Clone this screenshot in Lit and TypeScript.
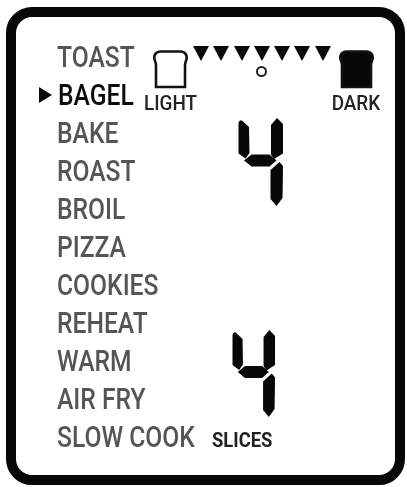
import { LitElement, html, css, svg } from "lit";
import { customElement } from "lit/decorators.js";

const MODES = ["TOAST", "BAGEL", "BAKE", "ROAST", "BROIL", "PIZZA", "COOKIES", "REHEAT", "WARM", "AIR FRY", "SLOW COOK"];
const LEVELS = [0, 1, 2, 3, 4, 5, 6];
const SELECTED_LEVEL = 3;
const BREAD = "M7,1.5 H28 C32,1.5 33.9,5 33.7,8 C33.5,11 32,12 32,15 V37 H3 V15 C3,12 1.5,11 1.3,8 C1.1,5 3,1.5 7,1.5 Z";

const digitFour = svg`
  <path d="M0.5,5 Q1.5,1 4.5,3 L11,9 L11.5,35 L7.5,40.5 L0.5,35.5 Z" />
  <path d="M39,0 L45,6 L45,35.5 L36,41 L33,36.5 L33,7 Z" />
  <path d="M6,42.5 L13.5,36.5 H31.5 L38.5,42.5 L31.5,48.5 H13.5 Z" />
  <path d="M41.5,44 L45,48 L44.5,80 L38.5,88 L32.5,81 L32.5,52 Z" />
`;

@customElement("app-root")
export class AppRoot extends LitElement {
  static styles = css`
    :host {
      display: block;
      width: 407px;
      height: 487px;
      padding: 7px 2px 2px 6px;
      box-sizing: border-box;
      background: #fff;
      font-family: Roboto, "Liberation Sans", sans-serif;
      overflow: hidden;
    }
    .frame {
      box-sizing: border-box;
      width: 399px;
      height: 478px;
      border: 10.5px solid #070707;
      border-radius: 26px;
      display: flex;
      align-items: flex-start;
      filter: blur(0.45px);
    }
    .menu {
      flex: 0 0 129px;
      width: 129px;
      min-width: 0;
      padding: 21px 0 0 23px;
      box-sizing: border-box;
      display: flex;
      flex-direction: column;
    }
    .mode {
      height: 38.1px;
      display: flex;
      align-items: center;
      font-size: 29px;
      font-weight: 500;
      line-height: 1;
      color: #555;
      white-space: nowrap;
      padding-left: 18px;
      position: relative;
    }
    .label {
      display: block;
      transform: scaleX(0.85);
      transform-origin: left center;
    }
    .mode.on {
      color: #0c0c0c;
    }
    .mode.on .label {
      transform: translateX(1px) scaleX(0.85);
    }
    .pointer {
      position: absolute;
      left: 0;
      top: 11px;
      width: 13px;
      height: 16px;
      fill: #0a0a0a;
    }
    .panel {
      flex: 1;
      min-width: 0;
      padding-top: 29px;
      display: flex;
      flex-direction: column;
      align-items: flex-start;
    }
    .shade {
      display: flex;
      align-items: flex-start;
    }
    .end {
      width: 50px;
      padding-top: 4px;
      display: flex;
      flex-direction: column;
      align-items: center;
      gap: 5px;
    }
    .bread {
      width: 35px;
      height: 39px;
      display: block;
    }
    .bread path { fill: none; stroke: #111; stroke-width: 2.6; }
    .bread.dark path { fill: #070707; }
    .tag {
      font-size: 21px;
      font-weight: 500;
      line-height: 18px;
      color: #222;
      white-space: nowrap;
      transform: scaleX(0.9);
    }
    .levels {
      margin-left: -3px;
      width: 139px;
      padding-left: 1px;
      box-sizing: border-box;
      display: flex;
      flex-direction: column;
    }
    .ticks {
      display: flex;
      gap: 4.3px;
    }
    .tick {
      width: 16px;
      height: 15px;
      fill: #0a0a0a;
      display: block;
      flex: none;
    }
    .slot {
      width: 16px;
      height: 10px;
      padding-top: 5px;
      display: flex;
      justify-content: center;
      flex: none;
    }
    .dot {
      width: 11px;
      height: 11px;
      box-sizing: border-box;
      border: 2.2px solid #222;
      border-radius: 50%;
      flex: none;
    }
    .slots {
      display: flex;
      gap: 4.3px;
    }
    .digit {
      display: block;
      fill: #070707;
    }
    .digit.dark-level {
      width: 46px;
      height: 88px;
      margin: 6px 0 0 93px;
    }
    .digit.slices {
      width: 44px;
      height: 87px;
      margin: 124px 0 0 87px;
    }
    .slices-tag {
      margin: 14px 0 0 67px;
      font-size: 20px;
      font-weight: 700;
      line-height: 18px;
      color: #222;
      transform: scaleX(0.92);
      transform-origin: left center;
    }
  `;

  render() {
    return html`
      <div class="frame">
        <div class="menu">
          ${MODES.map(
            (m) => html`<div class="mode ${m === "BAGEL" ? "on" : ""}">
              ${m === "BAGEL"
                ? html`<svg class="pointer" viewBox="0 0 13 16"><path d="M0,0 L13,8 L0,16 Z" /></svg>`
                : ""}<span class="label">${m}</span>
            </div>`,
          )}
        </div>
        <div class="panel">
          <div class="shade">
            <div class="end">
              <svg class="bread" viewBox="0 0 35 39"><path d="${BREAD}" /></svg>
              <span class="tag">LIGHT</span>
            </div>
            <div class="levels">
              <div class="ticks">
                ${LEVELS.map(
                  () => html`<svg class="tick" viewBox="0 0 16 15"><path d="M0,0 H16 L8,15 Z" /></svg>`,
                )}
              </div>
              <div class="slots">
                ${LEVELS.map(
                  (l) => html`<div class="slot">${l === SELECTED_LEVEL ? html`<div class="dot"></div>` : ""}</div>`,
                )}
              </div>
            </div>
            <div class="end">
              <svg class="bread dark" viewBox="0 0 35 39"><path d="${BREAD}" /></svg>
              <span class="tag">DARK</span>
            </div>
          </div>
          <svg class="digit dark-level" viewBox="0 0 46 88">${digitFour}</svg>
          <svg class="digit slices" viewBox="0 0 46 88" preserveAspectRatio="none">${digitFour}</svg>
          <div class="slices-tag">SLICES</div>
        </div>
      </div>
    `;
  }
}
